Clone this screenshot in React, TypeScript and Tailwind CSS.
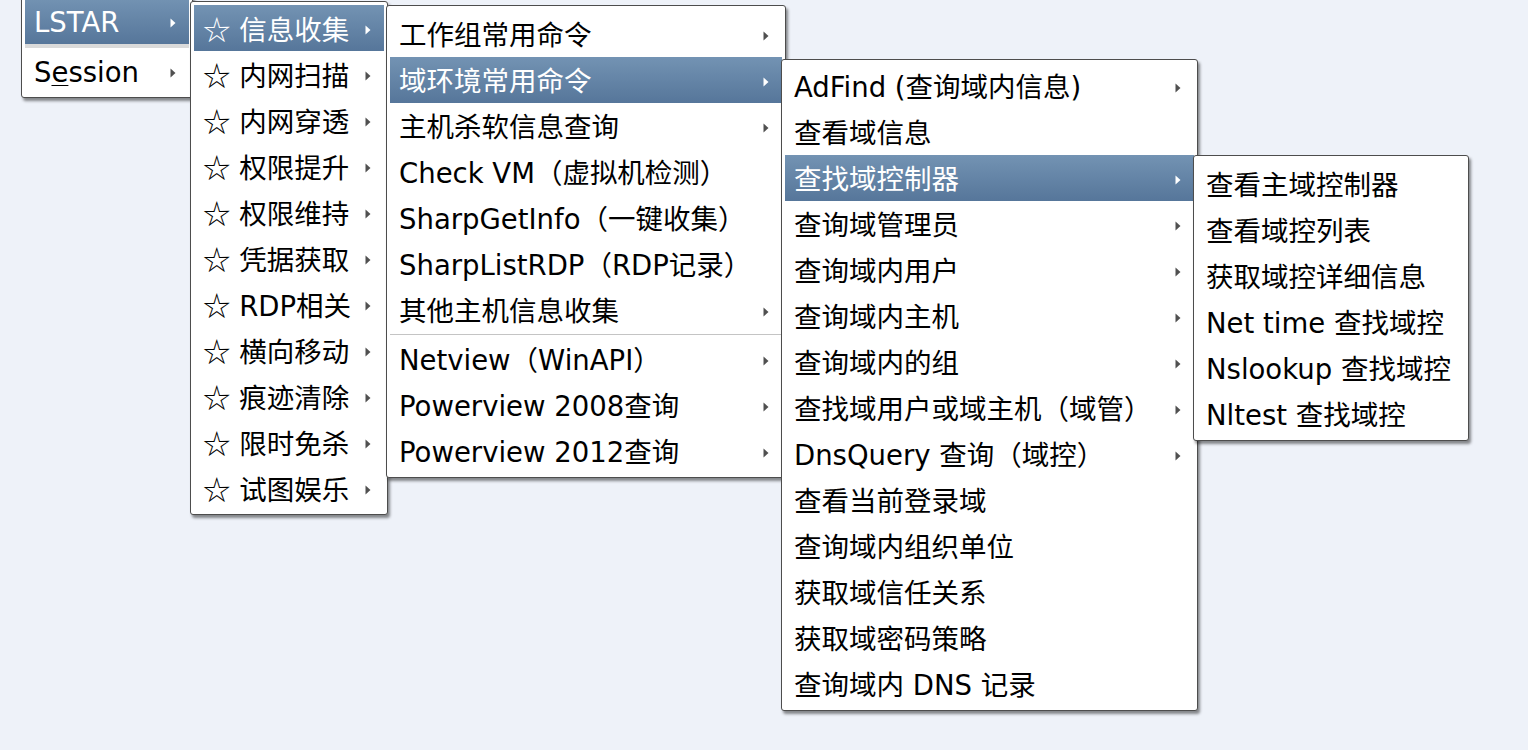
import type { ReactNode } from 'react';

type Item = {
  label: ReactNode;
  arrow?: boolean;
  active?: boolean;
  sep?: boolean;
};

function Arrow({ active }: { active?: boolean }) {
  return (
    <svg width="6" height="10" viewBox="0 0 6 10" className="shrink-0">
      <path d="M0.5 0.5 L5.5 5 L0.5 9.5 Z" fill={active ? '#ffffff' : '#505050'} />
    </svg>
  );
}

function Star({ children }: { children: ReactNode }) {
  return (
    <span>
      <span className="[font-family:'Noto_Sans_CJK_SC',sans-serif]">☆</span> {children}
    </span>
  );
}

const rowBase = 'flex h-[46px] items-center justify-between pl-[9px] pr-[13px] pt-[3px] leading-none';
const activeRow = 'bg-gradient-to-b from-[#7393b3] to-[#56769a] text-white';

function Menu({ className, items, pad }: { className: string; items: Item[]; pad: string }) {
  return (
    <div
      className={`absolute flex flex-col rounded-[3px] border border-[#4d4d4d] bg-white px-[3px] shadow-[2px_3px_3px_rgba(0,0,0,0.45)] ${pad} ${className}`}
    >
      {items.map((it, i) =>
        it.sep ? (
          <div key={i} className="flex h-[3px] flex-col justify-center">
            <div className="h-px bg-[#c4c4c4]" />
          </div>
        ) : (
          <div key={i} className={`${rowBase} ${it.active ? activeRow : 'text-black'}`}>
            <span className="whitespace-nowrap">{it.label}</span>
            {it.arrow && <Arrow active={it.active} />}
          </div>
        )
      )}
    </div>
  );
}

const menu2: Item[] = [
  '信息收集',
  '内网扫描',
  '内网穿透',
  '权限提升',
  '权限维持',
  '凭据获取',
  'RDP相关',
  '横向移动',
  '痕迹清除',
  '限时免杀',
  '试图娱乐',
].map((t, i) => ({ label: <Star>{t}</Star>, arrow: true, active: i === 0 }));

const menu3: Item[] = [
  { label: '工作组常用命令', arrow: true },
  { label: '域环境常用命令', arrow: true, active: true },
  { label: '主机杀软信息查询', arrow: true },
  { label: 'Check VM（虚拟机检测）' },
  { label: 'SharpGetInfo（一键收集）' },
  { label: 'SharpListRDP（RDP记录）' },
  { label: '其他主机信息收集', arrow: true },
  { label: '', sep: true },
  { label: 'Netview（WinAPI）', arrow: true },
  { label: 'Powerview 2008查询', arrow: true },
  { label: 'Powerview 2012查询', arrow: true },
];

const menu4: Item[] = [
  { label: 'AdFind (查询域内信息)', arrow: true },
  { label: '查看域信息' },
  { label: '查找域控制器', arrow: true, active: true },
  { label: '查询域管理员', arrow: true },
  { label: '查询域内用户', arrow: true },
  { label: '查询域内主机', arrow: true },
  { label: '查询域内的组', arrow: true },
  { label: '查找域用户或域主机（域管）', arrow: true },
  { label: 'DnsQuery 查询（域控）', arrow: true },
  { label: '查看当前登录域' },
  { label: '查询域内组织单位' },
  { label: '获取域信任关系' },
  { label: '获取域密码策略' },
  { label: '查询域内 DNS 记录' },
];

const menu5: Item[] = [
  { label: '查看主域控制器' },
  { label: '查看域控列表' },
  { label: '获取域控详细信息' },
  { label: 'Net time 查找域控' },
  { label: 'Nslookup 查找域控' },
  { label: 'Nltest 查找域控' },
];

export default function App() {
  return (
    <div className="relative h-[750px] w-full overflow-hidden bg-[#eef2f9] text-[27.5px] [font-family:'DejaVu_Sans','Noto_Sans_CJK_SC',sans-serif]">
      <div className="absolute left-[21px] top-[-6px] flex w-[172px] flex-col rounded-[3px] border border-[#4d4d4d] bg-white px-[3px] pb-[3px] pt-[3px] shadow-[2px_3px_3px_rgba(0,0,0,0.45)]">
        <div className={`${rowBase} ${activeRow}`}>
          <span>LSTAR</span>
          <Arrow active />
        </div>
        <div className="h-[4px] bg-[#dadada]" />
        <div className={`${rowBase} text-black`}>
          <span>
            S<span className="underline decoration-1 underline-offset-[3px]">e</span>ssion
          </span>
          <Arrow />
        </div>
      </div>

      <Menu className="left-[190px] top-[1px] w-[198px]" pad="pt-[3px] pb-[3px]" items={menu2} />
      <Menu className="left-[386px] top-[5px] w-[400px]" pad="pt-[5px] pb-[3px]" items={menu3} />
      <Menu className="left-[781px] top-[59px] w-[417px]" pad="pt-[3px] pb-[3px]" items={menu4} />
      <Menu className="left-[1193px] top-[155px] w-[276px]" pad="pt-[5px] pb-[3px]" items={menu5} />
    </div>
  );
}
